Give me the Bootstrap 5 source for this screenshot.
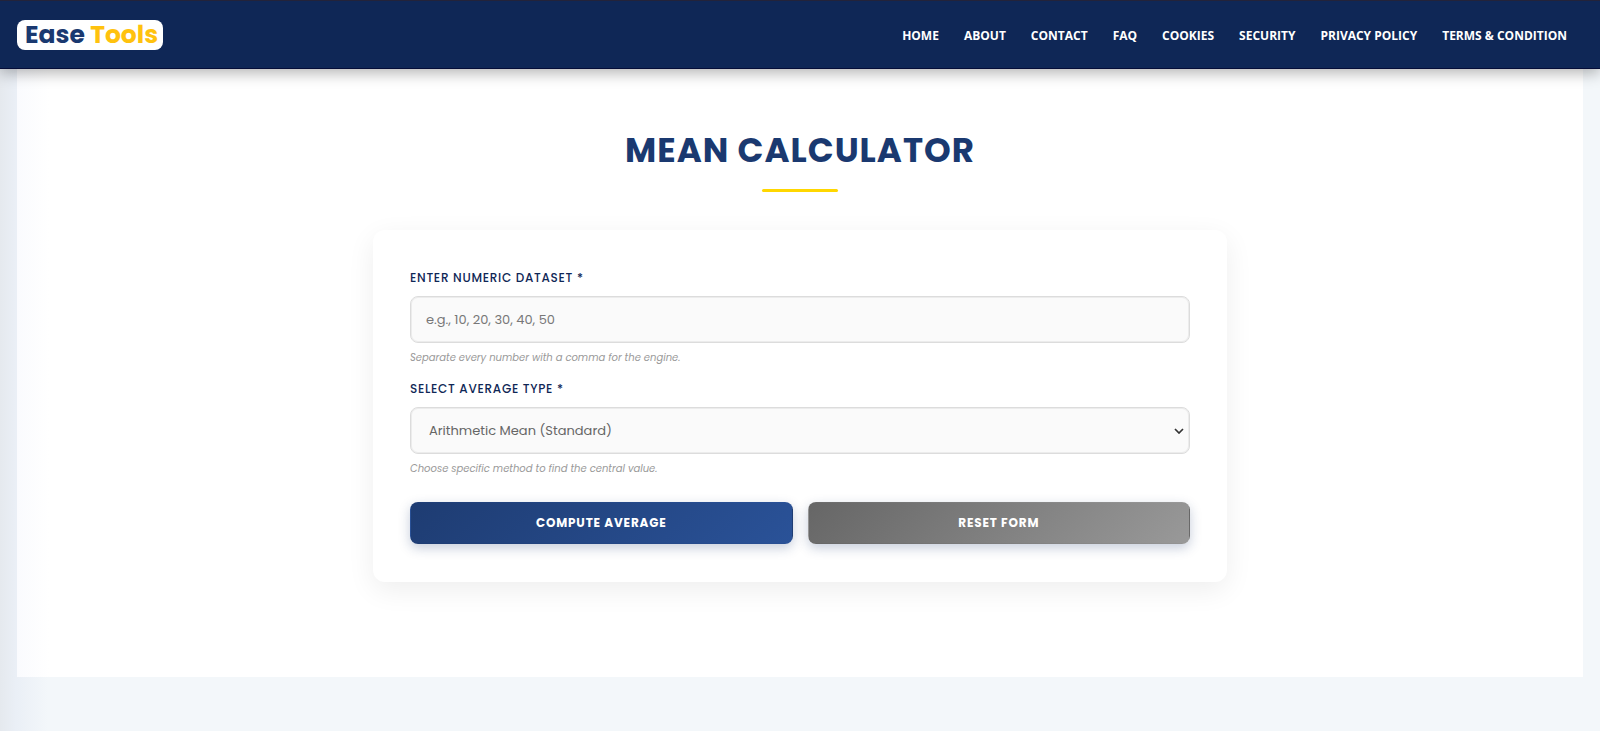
<!DOCTYPE html>
<html lang="en">
<head>
<meta charset="utf-8">
<meta name="viewport" content="width=device-width, initial-scale=1">
<title>Mean Calculator - Ease Tools</title>
<link href="https://cdn.jsdelivr.net/npm/bootstrap@5.3.0/dist/css/bootstrap.min.css" rel="stylesheet">
<style>
  :root { --navy: #0f2756; --blue: #1a3970; --gold: #ffd700; }
  body {
    font-family: Poppins, Inter, sans-serif;
    background: linear-gradient(90deg, #e5e9ee 0, #eaeff6 16px, #f3f7fa 48px);
    background-color: #f3f7fa;
  }
  .site-header {
    background: var(--navy);
    border-top: 1px solid #23233a;
    border-bottom: 1px solid #050d38;
    box-shadow: 0 4px 14px rgba(0, 0, 0, .3);
    height: 69px;
    padding: 0 33px 0 17px;
  }
  .brand-logo {
    background: #fff;
    border-radius: 8px;
    color: var(--blue);
    font-size: 25px;
    font-weight: 700;
    line-height: 30px;
    padding: 0 5px 0 8px;
  }
  .brand-logo span { color: #ffc20e; }
  .site-nav { gap: 25px; }
  .site-nav .nav-link {
    color: #fff;
    font-family: "Segoe UI", "Open Sans", sans-serif;
    font-size: 12px;
    font-weight: 700;
    line-height: 20px;
    padding: 9px 0 7px;
    text-transform: uppercase;
  }
  .tool-page {
    background: linear-gradient(90deg, #fafbfe 0, #fff 32px);
    margin: 0 17px;
    padding: 60px 16px 95px;
  }
  .tool-title {
    color: var(--blue);
    font-size: 34px;
    font-weight: 700;
    letter-spacing: 1px;
    line-height: 42px;
  }
  .title-rule { background: var(--gold); border-radius: 2px; height: 3px; width: 76px; margin: 18px auto 38px; }
  .tool-card {
    background: #fff;
    border-radius: 12px;
    box-shadow: 0 8px 28px rgba(0, 0, 0, .07);
    max-width: 854px;
    padding: 38px 37px;
  }
  .tool-card .form-label {
    color: var(--navy);
    display: block;
    font-size: 12px;
    font-weight: 500;
    letter-spacing: .06em;
    line-height: 20px;
    margin-bottom: 8px;
    text-transform: uppercase;
  }
  .tool-field {
    background-color: #fafafa;
    border: 1px solid #dcdcdc;
    border-radius: 8px;
    box-shadow: 0 0 0 1px #ececec inset;
    color: #666;
    font-size: 13px;
    height: 47px;
    padding: 0 15px;
  }
  .tool-field::placeholder { color: #777; }
  select.tool-field {
    background-image: url("data:image/svg+xml,%3Csvg xmlns='http://www.w3.org/2000/svg' viewBox='0 0 10 6'%3E%3Cpath d='M1 1l4 4 4-4' fill='none' stroke='%23333' stroke-width='1.7'/%3E%3C/svg%3E");
    background-position: right 5px center;
    background-size: 10px 6px;
    padding-left: 18px;
  }
  .tool-card .form-text {
    color: #999;
    font-size: 10px;
    font-style: italic;
    line-height: 17px;
    margin: 6px 0 13px;
  }
  .tool-actions { gap: 15px; padding-top: 12px; }
  .btn-tool {
    border: 1px solid transparent;
    border-radius: 8px;
    box-shadow: 0 4px 12px rgba(26, 57, 112, .25);
    color: #fff;
    font-size: 12px;
    font-weight: 700;
    height: 42px;
    letter-spacing: .07em;
    padding: 0;
    text-transform: uppercase;
  }
  .btn-compute { background: linear-gradient(135deg, #1e3c72, #2a5298); }
  .btn-reset { background: linear-gradient(135deg, #666, #999); }
</style>
</head>
<body>
<header class="site-header navbar navbar-expand position-relative">
  <a class="brand-logo text-decoration-none" href="#">Ease <span>Tools</span></a>
  <nav class="ms-auto" aria-label="Main">
    <ul class="navbar-nav site-nav">
      <li class="nav-item"><a class="nav-link px-0" href="#">Home</a></li>
      <li class="nav-item"><a class="nav-link px-0" href="#">About</a></li>
      <li class="nav-item"><a class="nav-link px-0" href="#">Contact</a></li>
      <li class="nav-item"><a class="nav-link px-0" href="#">FAQ</a></li>
      <li class="nav-item"><a class="nav-link px-0" href="#">Cookies</a></li>
      <li class="nav-item"><a class="nav-link px-0" href="#">Security</a></li>
      <li class="nav-item"><a class="nav-link px-0" href="#">Privacy Policy</a></li>
      <li class="nav-item"><a class="nav-link px-0" href="#">Terms &amp; Condition</a></li>
    </ul>
  </nav>
</header>
<main class="tool-page">
  <h1 class="tool-title text-center text-uppercase mb-0">Mean Calculator</h1>
  <div class="title-rule"></div>
  <form class="tool-card mx-auto">
    <label class="form-label" for="dataset">Enter Numeric Dataset *</label>
    <input class="form-control tool-field" id="dataset" type="text" placeholder="e.g., 10, 20, 30, 40, 50">
    <div class="form-text">Separate every number with a comma for the engine.</div>
    <label class="form-label" for="avgType">Select Average Type *</label>
    <select class="form-select tool-field" id="avgType">
      <option>Arithmetic Mean (Standard)</option>
      <option>Geometric Mean</option>
      <option>Harmonic Mean</option>
    </select>
    <div class="form-text">Choose specific method to find the central value.</div>
    <div class="tool-actions d-flex">
      <button class="btn btn-tool btn-compute flex-fill w-50" type="button">Compute Average</button>
      <button class="btn btn-tool btn-reset flex-fill w-50" type="reset">Reset Form</button>
    </div>
  </form>
</main>
<script src="https://cdn.jsdelivr.net/npm/bootstrap@5.3.0/dist/js/bootstrap.bundle.min.js"></script>
</body>
</html>
